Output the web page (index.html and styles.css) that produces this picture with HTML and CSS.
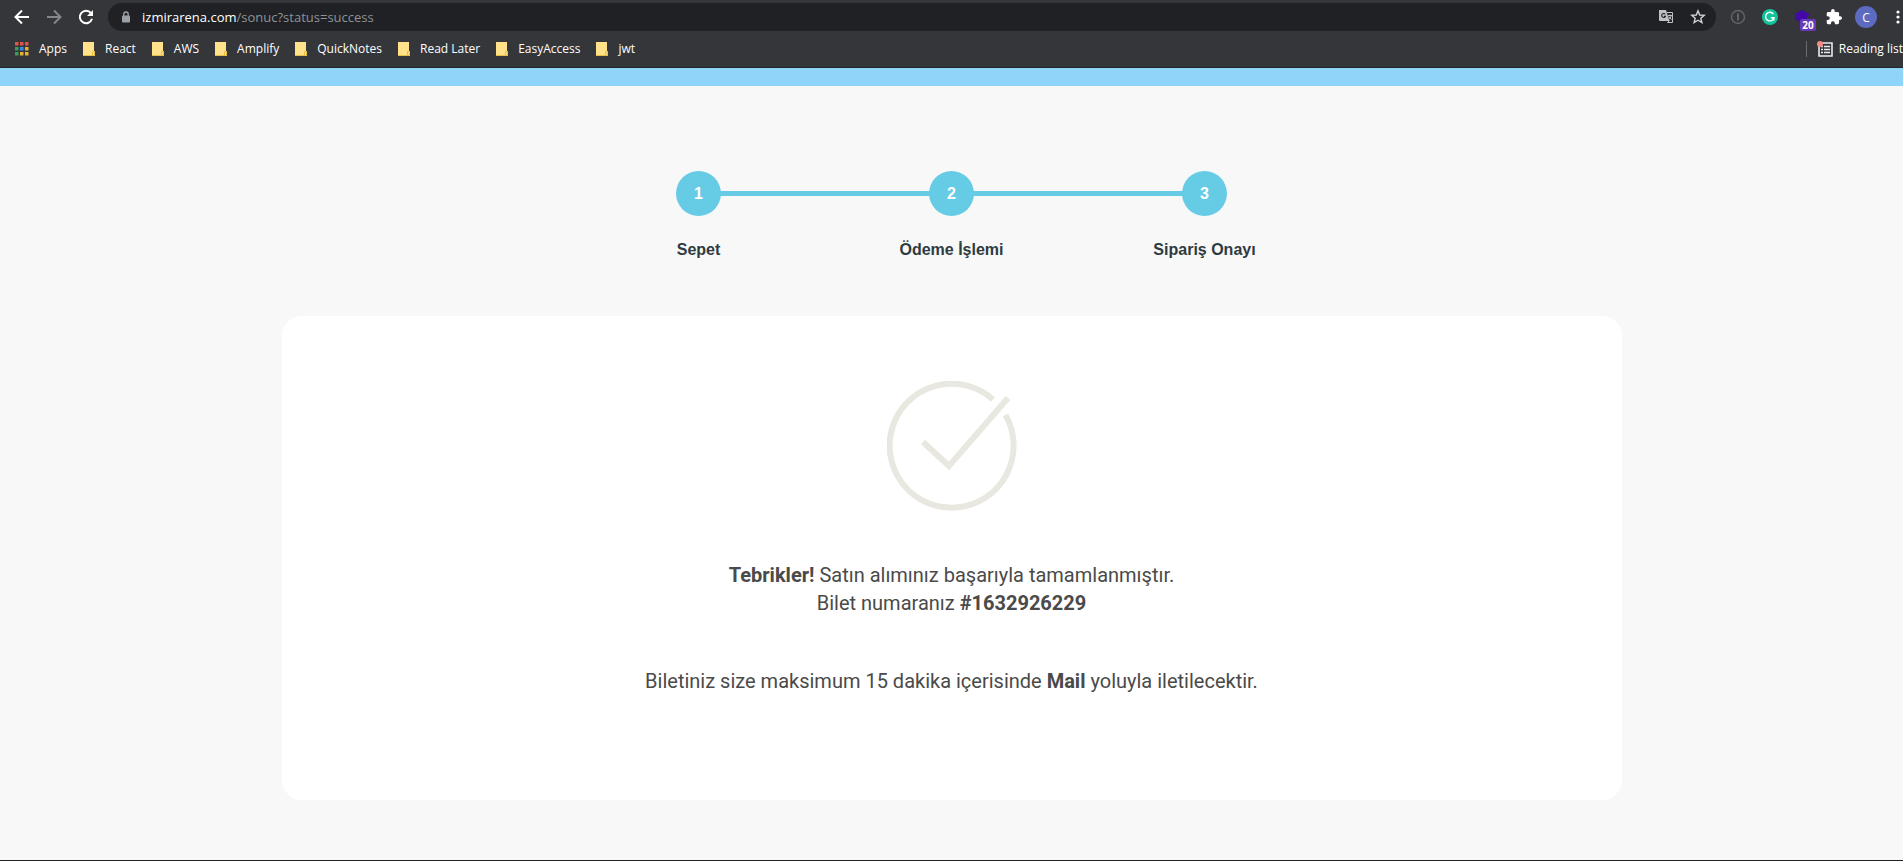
FILE: index.html
```html
<!DOCTYPE html>
<html lang="tr">
<head>
<meta charset="utf-8">
<title>Sipariş Onayı</title>
<link rel="stylesheet" href="styles.css">
</head>
<body>
<header class="browser">
  <div class="toolbar">
    <button class="nav-btn" aria-label="Back"><svg width="16" height="16" viewBox="0 0 16 16"><path d="M15 8H2M8 1.500L1.500 8L8 14.500" fill="none" stroke="#fff" stroke-width="2"/></svg></button>
    <button class="nav-btn" aria-label="Forward"><svg width="16" height="16" viewBox="0 0 16 16"><path d="M1 8H14M8 1.500L14.500 8L8 14.500" fill="none" stroke="#85868a" stroke-width="2"/></svg></button>
    <button class="nav-btn" aria-label="Reload"><svg width="16" height="16" viewBox="0 0 16 16"><path d="M13 4.200A6.200 6.200 0 1 0 14 9.800" fill="none" stroke="#fff" stroke-width="2"/><path d="M15 1V7H9Z" fill="#fff"/></svg></button>
    <div class="address">
      <svg class="lock" width="10" height="12" viewBox="0 0 10 12"><rect x="1" y="4.500" width="8" height="7" rx="1" fill="#9aa0a6"/><path d="M2.800 5V3.200a2.200 2.200 0 0 1 4.400 0V5" fill="none" stroke="#9aa0a6" stroke-width="1.300"/></svg>
      <span class="url"><span class="host">izmirarena.com</span>/sonuc?status=success</span>
      <button class="addr-btn" aria-label="Translate"><svg width="16" height="16" viewBox="0 0 16 16"><path d="M1 1h7l3.500 11H2a1 1 0 0 1-1-1Z" fill="#bdc1c6"/><path d="M9 3.500h5.500v10H9.500l2-2" fill="none" stroke="#bdc1c6"/><path d="M7.300 5.300A2 2 0 1 0 7.500 7.300H5.800" fill="none" stroke="#202124" stroke-width="1.100"/><path d="M10 6.500h4M12 5.500v1M13.200 6.500C13 8.500 11.500 10 10.500 10.500M10.700 7.500L13.500 10.800" fill="none" stroke="#bdc1c6"/></svg></button>
      <button class="addr-btn" aria-label="Bookmark"><svg width="16" height="16" viewBox="0 0 16 16"><path d="M8 1.800L9.700 6L14.200 6.300L10.800 9.200L11.900 13.600L8 11.200L4.100 13.600L5.200 9.200L1.800 6.300L6.300 6Z" fill="none" stroke="#d0d2d6" stroke-width="1.400"/></svg></button>
    </div>
    <div class="extensions">
      <button class="ext" aria-label="Password manager"><svg width="16" height="16" viewBox="0 0 16 16"><circle cx="8" cy="8" r="6.500" fill="none" stroke="#626469" stroke-width="1.400"/><path d="M8 4.500v7" stroke="#626469" stroke-width="2"/></svg></button>
      <button class="ext" aria-label="Grammarly"><svg width="16" height="16" viewBox="0 0 16 16"><circle cx="8" cy="8" r="8" fill="#15c39a"/><path d="M11.300 5A4.300 4.300 0 1 0 12 8.800H8.800M11.800 8.800V11.500" fill="none" stroke="#fff" stroke-width="1.400"/></svg></button>
      <button class="ext" aria-label="Extension, 20 items"><svg width="16" height="16" viewBox="0 0 16 16"><path d="M8 1L16 5.500L13 8V12H4L1 10V8L3 7L0 5.500Z" fill="#4209a8"/></svg><span class="count">20</span></button>
      <button class="ext" aria-label="Extensions"><svg width="16" height="16" viewBox="1 1 22 22"><path d="M20.500 11H19V7c0-1.100-.9-2-2-2h-4V3.500a2.500 2.500 0 0 0-5 0V5H4c-1.100 0-2 .9-2 2v3.800h1.500a2.700 2.700 0 0 1 0 5.400H2V20c0 1.100.9 2 2 2h3.800v-1.500a2.700 2.700 0 0 1 5.400 0V22H17c1.100 0 2-.9 2-2v-4h1.500a2.500 2.500 0 0 0 0-5z" fill="#fff"/></svg></button>
    </div>
    <button class="avatar">C</button>
    <button class="menu" aria-label="Menu"><svg width="4" height="14" viewBox="0 0 4 14"><circle cx="2" cy="2" r="1.600" fill="#fff"/><circle cx="2" cy="7" r="1.600" fill="#fff"/><circle cx="2" cy="12" r="1.600" fill="#fff"/></svg></button>
  </div>
  <nav class="bookmarks">
    <a class="mark" href="#"><svg width="14" height="14" viewBox="0 0 14 14"><path d="M0 0h3.500v3.500H0zM5 0h3.500v3.500H5zM10 0h3.500v3.500H10z" fill="#e0554c"/><path d="M0 5h3.500v3.500H0zM0 10h3.500v3.500H0z" fill="#3d9c5a"/><path d="M5 5h3.500v3.500H5z" fill="#3c8cf0"/><path d="M10 5h3.500v3.500H10zM5 10h3.500v3.500H5zM10 10h3.500v3.500H10z" fill="#e8b12f"/></svg>Apps</a>
    <a class="mark" href="#"><svg width="12" height="14" viewBox="0 0 12 14"><path d="M0 0h11v9h1v5H0z" fill="#ffe28a"/><path d="M9.500 14v-4.500h2v4.500M0 13.500h12" fill="none" stroke="#e6bd45"/></svg>React</a>
    <a class="mark" href="#"><svg width="12" height="14" viewBox="0 0 12 14"><path d="M0 0h11v9h1v5H0z" fill="#ffe28a"/><path d="M9.500 14v-4.500h2v4.500M0 13.500h12" fill="none" stroke="#e6bd45"/></svg>AWS</a>
    <a class="mark" href="#"><svg width="12" height="14" viewBox="0 0 12 14"><path d="M0 0h11v9h1v5H0z" fill="#ffe28a"/><path d="M9.500 14v-4.500h2v4.500M0 13.500h12" fill="none" stroke="#e6bd45"/></svg>Amplify</a>
    <a class="mark" href="#"><svg width="12" height="14" viewBox="0 0 12 14"><path d="M0 0h11v9h1v5H0z" fill="#ffe28a"/><path d="M9.500 14v-4.500h2v4.500M0 13.500h12" fill="none" stroke="#e6bd45"/></svg>QuickNotes</a>
    <a class="mark" href="#"><svg width="12" height="14" viewBox="0 0 12 14"><path d="M0 0h11v9h1v5H0z" fill="#ffe28a"/><path d="M9.500 14v-4.500h2v4.500M0 13.500h12" fill="none" stroke="#e6bd45"/></svg>Read Later</a>
    <a class="mark" href="#"><svg width="12" height="14" viewBox="0 0 12 14"><path d="M0 0h11v9h1v5H0z" fill="#ffe28a"/><path d="M9.500 14v-4.500h2v4.500M0 13.500h12" fill="none" stroke="#e6bd45"/></svg>EasyAccess</a>
    <a class="mark" href="#"><svg width="12" height="14" viewBox="0 0 12 14"><path d="M0 0h11v9h1v5H0z" fill="#ffe28a"/><path d="M9.500 14v-4.500h2v4.500M0 13.500h12" fill="none" stroke="#e6bd45"/></svg>jwt</a>
    <button class="reading"><svg width="16" height="16" viewBox="0 0 16 16"><path d="M2 2h13v13H2z" fill="none" stroke="#e8eaed" stroke-width="1.600"/><path d="M4 5.500h2M4 8.500h2M4 11.500h2M7 5.500h6M7 8.500h6M7 11.500h6" stroke="#e8eaed" stroke-width="1.500"/><circle cx="3" cy="3" r="3" fill="#f28b82"/></svg>Reading list</button>
  </nav>
</header>
<main class="page">
  <ol class="steps">
    <li class="step"><span class="num">1</span><span class="label">Sepet</span></li>
    <li class="step"><span class="num">2</span><span class="label">Ödeme İşlemi</span></li>
    <li class="step"><span class="num">3</span><span class="label">Sipariş Onayı</span></li>
  </ol>
  <section class="card">
    <svg width="130" height="130" viewBox="0 0 130 130"><g fill="none" stroke="#e9e8e0" stroke-width="6"><path d="M106 18.500A62 62 0 1 0 118.500 34"/><path d="M36 61L62 85L121 17"/></g></svg>
    <p class="text"><strong>Tebrikler!</strong> Satın alımınız başarıyla tamamlanmıştır.<br>Bilet numaranız <strong>#1632926229</strong></p>
    <p class="text">Biletiniz size maksimum 15 dakika içerisinde <strong>Mail</strong> yoluyla iletilecektir.</p>
  </section>
</main>
</body>
</html>
```
FILE: styles.css
```css
* { box-sizing: border-box; }
body {
  margin: 0;
  min-height: 100vh;
  display: flex;
  flex-direction: column;
  overflow-x: hidden;
  background: #f8f8f8;
  font-family: Roboto, sans-serif;
}
button { border: 0; padding: 0; background: none; color: inherit; font: inherit; }
svg { display: block; flex: none; }

.browser {
  background: #35363a;
  border-bottom: 1px solid #24272a;
  color: #fff;
  font-family: "Open Sans", "Noto Sans", sans-serif;
}
.toolbar {
  display: flex;
  align-items: center;
  height: 34px;
  padding-left: 14px;
}
.nav-btn { width: 16px; margin-right: 16px; }
.address {
  display: flex;
  align-items: center;
  flex: 1;
  height: 28px;
  margin-left: -2px;
  padding: 0 10px 0 13px;
  border-radius: 14px;
  background: #202124;
}
.url { flex: 1; margin-left: 11px; font-size: 13px; color: #8f9296; }
.host { color: #fff; }
.addr-btn { margin-left: 16px; }
.extensions { display: flex; gap: 16px; margin-left: 14px; }
.ext { position: relative; }
.count {
  position: absolute;
  left: 6px;
  top: 10px;
  width: 16px;
  height: 12px;
  border-radius: 2px;
  background: #673ab7;
  font-size: 10px;
  font-weight: 700;
  line-height: 12px;
}
.avatar {
  width: 22px;
  height: 22px;
  margin-left: 13px;
  border-radius: 50%;
  background: #5c6bc0;
  font-size: 12px;
}
.menu { margin: 0 3px 0 19px; }

.bookmarks {
  display: flex;
  align-items: center;
  height: 33px;
  padding: 0 0 4px 15px;
  font-size: 12px;
}
.mark {
  display: flex;
  align-items: center;
  gap: 10px;
  margin-right: 16px;
  color: #fff;
  text-decoration: none;
  white-space: nowrap;
}
.reading {
  display: flex;
  align-items: center;
  gap: 6px;
  height: 16px;
  margin-left: auto;
  padding-left: 10px;
  border-left: 1px solid #6b6c70;
  white-space: nowrap;
}

.page {
  flex: 1;
  padding: 85px 24px 60px;
  border-top: 18px solid #90d5f9;
  border-bottom: 1px solid #202124;
}
.steps {
  display: grid;
  grid-template-columns: repeat(3, 1fr);
  max-width: 759px;
  margin: 0 auto;
  padding: 0;
  list-style: none;
  font-family: "Liberation Sans", Arial, sans-serif;
  font-size: 16px;
  font-weight: 700;
}
.step {
  position: relative;
  display: flex;
  flex-direction: column;
  align-items: center;
  gap: 24px;
}
.step + .step::before {
  content: "";
  position: absolute;
  top: 20px;
  right: 50%;
  width: 100%;
  height: 5px;
  background: #66cce6;
}
.num {
  z-index: 1;
  width: 45px;
  border-radius: 50%;
  background: #66cce6;
  color: #fff;
  line-height: 45px;
  text-align: center;
}
.label { color: #2f3b42; line-height: 20px; }

.card {
  display: flex;
  flex-direction: column;
  align-items: center;
  max-width: 1340px;
  margin: 56px auto 0;
  padding: 65px 24px 105px;
  border-radius: 20px;
  background: #fff;
}
.text {
  margin: 50px 0 0;
  color: #4a4a4a;
  font-size: 20px;
  line-height: 28px;
  text-align: center;
}
```
